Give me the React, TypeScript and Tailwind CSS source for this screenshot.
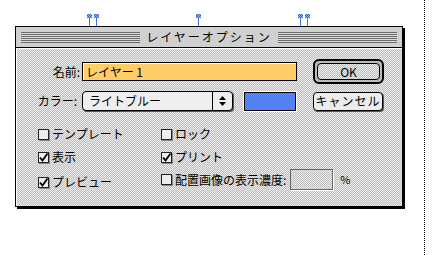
import React from 'react';

const dither =
  'bg-[repeating-conic-gradient(#bdbdbd_0%_25%,#ececec_0%_50%)] bg-[length:2px_2px]';

function Pin({ x }: { x: number }) {
  return (
    <div className="absolute top-[14px] flex flex-col items-center" style={{ left: x - 2 }}>
      <div className="h-[4px] w-[5px] bg-[repeating-conic-gradient(#3060f0_0%_25%,#90b0ff_0%_50%)] bg-[length:2px_2px]" />
      <div className="h-[8px] w-px bg-[#3a6cf4]" />
    </div>
  );
}

function Check({ checked, label }: { checked?: boolean; label: string }) {
  return (
    <div className="flex items-center gap-[3px]">
      <div className="relative h-[11px] w-[11px] border border-[#222] bg-[#eee] shadow-[1px_1px_0_#888]">
        {checked && (
          <svg viewBox="0 0 11 11" className="absolute -left-px -top-px h-[11px] w-[11px]">
            <path d="M2 5.5 L4.5 8.5 L9.5 1.5" fill="none" stroke="#000" strokeWidth="1.8" />
          </svg>
        )}
      </div>
      <span className="text-[12px] leading-none text-black">{label}</span>
    </div>
  );
}

function Stripes() {
  return (
    <div className="h-[11px] flex-1 bg-[repeating-linear-gradient(#6a6a6a_0_1px,#dcdcdc_1px_2px)]" />
  );
}

export default function App() {
  return (
    <div className="relative h-[255px] w-[439px] overflow-hidden bg-white font-['Noto_Sans_CJK_JP','Noto_Sans',sans-serif] pt-[26px] pl-[15px]">
      <Pin x={89} />
      <Pin x={96} />
      <Pin x={198} />
      <Pin x={300} />
      <Pin x={307} />
      <div className="absolute left-[424px] top-0 h-full border-l border-dotted border-black" />

      <div className="w-[388px] border border-black shadow-[2px_2px_0_#000]">
        {/* title bar */}
        <div className="flex h-[21px] items-center gap-[4px] border-b border-black bg-[#d0d0d0] px-[5px]">
          <Stripes />
          <span className="px-[2px] text-[12px] leading-none tracking-[2px] text-black">レイヤーオプション</span>
          <Stripes />
        </div>

        {/* body */}
        <div className={`${dither} h-[158px] border-t border-l border-white pt-[10px]`}>
          <div className="flex items-center">
            <span className="w-[63px] text-right text-[12px] leading-none">名前:</span>
            <div className="ml-[2px] flex h-[19px] w-[215px] items-center border border-black bg-[#ffcc66] pl-[3px] text-[12px] leading-none shadow-[inset_1px_1px_0_#fff]">
              レイヤー 1
            </div>
            <div className="ml-[16px] rounded-[6px] border-2 border-black bg-[#bbb] p-[2px]">
              <div className={`${dither} flex h-[17px] w-[63px] items-center justify-center rounded-[4px] border border-black text-[12px] leading-none`}>
                OK
              </div>
            </div>
          </div>

          <div className="mt-[7px] flex items-center">
            <span className="w-[60px] text-right text-[12px] leading-none">カラー:</span>
            <div className="ml-[5px] flex h-[20px] w-[151px] items-stretch rounded-[4px] border border-black bg-[#eee] shadow-[1px_1px_0_#555]">
              <span className="flex flex-1 items-center pl-[6px] text-[12px] leading-none">ライトブルー</span>
              <div className="flex w-[20px] items-center justify-center border-l border-black">
                <svg viewBox="0 0 9 12" className="h-[12px] w-[9px]">
                  <path d="M4.5 1 L8 5 L1 5 Z M4.5 11 L8 7 L1 7 Z" fill="#000" />
                </svg>
              </div>
            </div>
            <div className="ml-[11px] h-[19px] w-[52px] border border-black bg-[repeating-conic-gradient(#4c78f0_0%_25%,#5a88f8_0%_50%)] bg-[length:2px_2px] shadow-[0_0_0_1px_#fff]" />
            <div className="ml-[17px] flex h-[19px] w-[70px] items-center justify-center rounded-[4px] border border-black bg-[#ececec] text-[12px] leading-none tracking-[1px] shadow-[1px_1px_0_#555]">
              キャンセル
            </div>
          </div>

          <div className="mt-[17px] grid grid-cols-[123px_1fr] gap-y-[11px] pl-[21px]">
            <Check label="テンプレート" />
            <Check label="ロック" />
            <Check checked label="表示" />
            <Check checked label="プリント" />
            <Check checked label="プレビュー" />
            <div className="-mt-[5px] flex items-center">
              <Check label="配置画像の表示濃度:" />
              <div className={`${dither} ml-[4px] h-[21px] w-[43px] border border-[#666] shadow-[1px_1px_0_#fff]`} />
              <span className="ml-[7px] text-[11px] leading-none">%</span>
            </div>
          </div>
        </div>
      </div>
    </div>
  );
}
